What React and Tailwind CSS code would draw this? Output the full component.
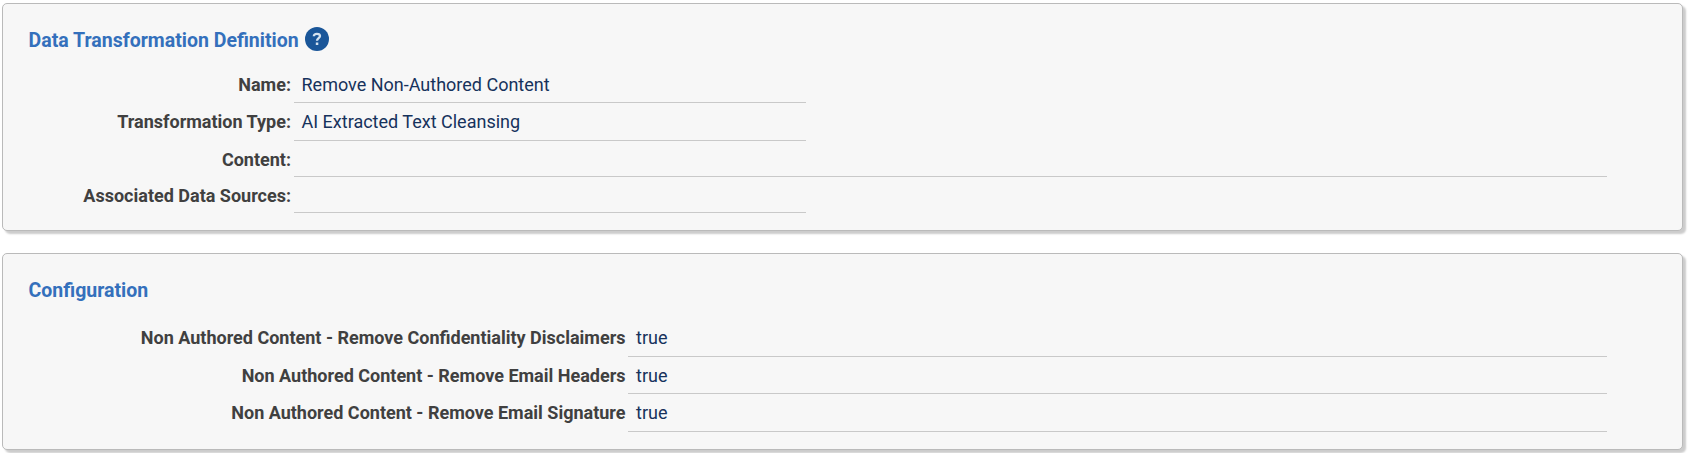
function Panel({ className, children }) {
  return (
    <section
      className={`mr-[5px] ml-[2px] rounded-[5px] border border-[#bababa] bg-[#f7f7f7] pr-[75px] shadow-[3px_3px_2px_#cccccc] ${className}`}
    >
      {children}
    </section>
  );
}

function Row({ label, value, labelWidth, lineWidth = "flex-1", height, pad = "pt-[7px]", inset = "pl-[7.5px]" }) {
  return (
    <div className={`flex ${height}`}>
      <div className={`${labelWidth} ${pad} shrink-0 text-right font-bold text-[#404040]`}>{label}</div>
      <div className={`${lineWidth} ${pad} ${inset} border-b border-[#c9c9c9] text-[#16325c]`}>{value}</div>
    </div>
  );
}

function HelpIcon() {
  return (
    <svg width="24" height="24" viewBox="0 0 24 24" role="img" aria-label="Help">
      <circle cx="12" cy="12" r="12" fill="#1a5699" />
      <path
        d="M8.8 9.3C8.9 7.7 10.1 6.8 11.9 6.8c1.9 0 3.1.8 3.1 2.2 0 2.2-3 2.2-3 4.8"
        fill="none"
        stroke="#d5e2ef"
        strokeWidth="2.3"
      />
      <rect x="10.8" y="15.5" width="2.5" height="2.5" fill="#d5e2ef" />
    </svg>
  );
}

export default function App() {
  return (
    <main className="h-[453px] overflow-hidden bg-white pt-[3px] font-[Roboto,sans-serif] text-[18px] leading-6">
      <Panel className="h-[228px]">
        <div className="flex h-[62px] items-start gap-[6px] pt-[23px] pl-[25.6px]">
          <h2 className="pt-px text-[19.5px] leading-[26px] font-bold text-[#3470bc]">Data Transformation Definition</h2>
          <HelpIcon />
        </div>
        <Row label="Name:" value="Remove Non-Authored Content" labelWidth="w-[291px] pr-[3px]" lineWidth="w-[512px]" height="h-[37px]" />
        <Row label="Transformation Type:" value="AI Extracted Text Cleansing" labelWidth="w-[291px] pr-[3px]" lineWidth="w-[512px]" height="h-[38px]" />
        <Row label="Content:" labelWidth="w-[291px] pr-[3px]" height="h-[36px]" />
        <Row label="Associated Data Sources:" labelWidth="w-[291px] pr-[3px]" lineWidth="w-[512px]" height="h-[36px]" />
      </Panel>
      <Panel className="mt-[22px] h-[197px]">
        <div className="h-[66px] pt-[24px] pl-[25.6px]">
          <h2 className="text-[19.5px] leading-[26px] font-bold text-[#3470bc]">Configuration</h2>
        </div>
        <Row label="Non Authored Content - Remove Confidentiality Disclaimers" value="true" labelWidth="w-[625px] pr-[2.5px]" inset="pl-2" height="h-[37px]" pad="pt-[6px]" />
        <Row label="Non Authored Content - Remove Email Headers" value="true" labelWidth="w-[625px] pr-[2.5px]" inset="pl-2" height="h-[37px]" />
        <Row label="Non Authored Content - Remove Email Signature" value="true" labelWidth="w-[625px] pr-[2.5px]" inset="pl-2" height="h-[38px]" />
      </Panel>
    </main>
  );
}
